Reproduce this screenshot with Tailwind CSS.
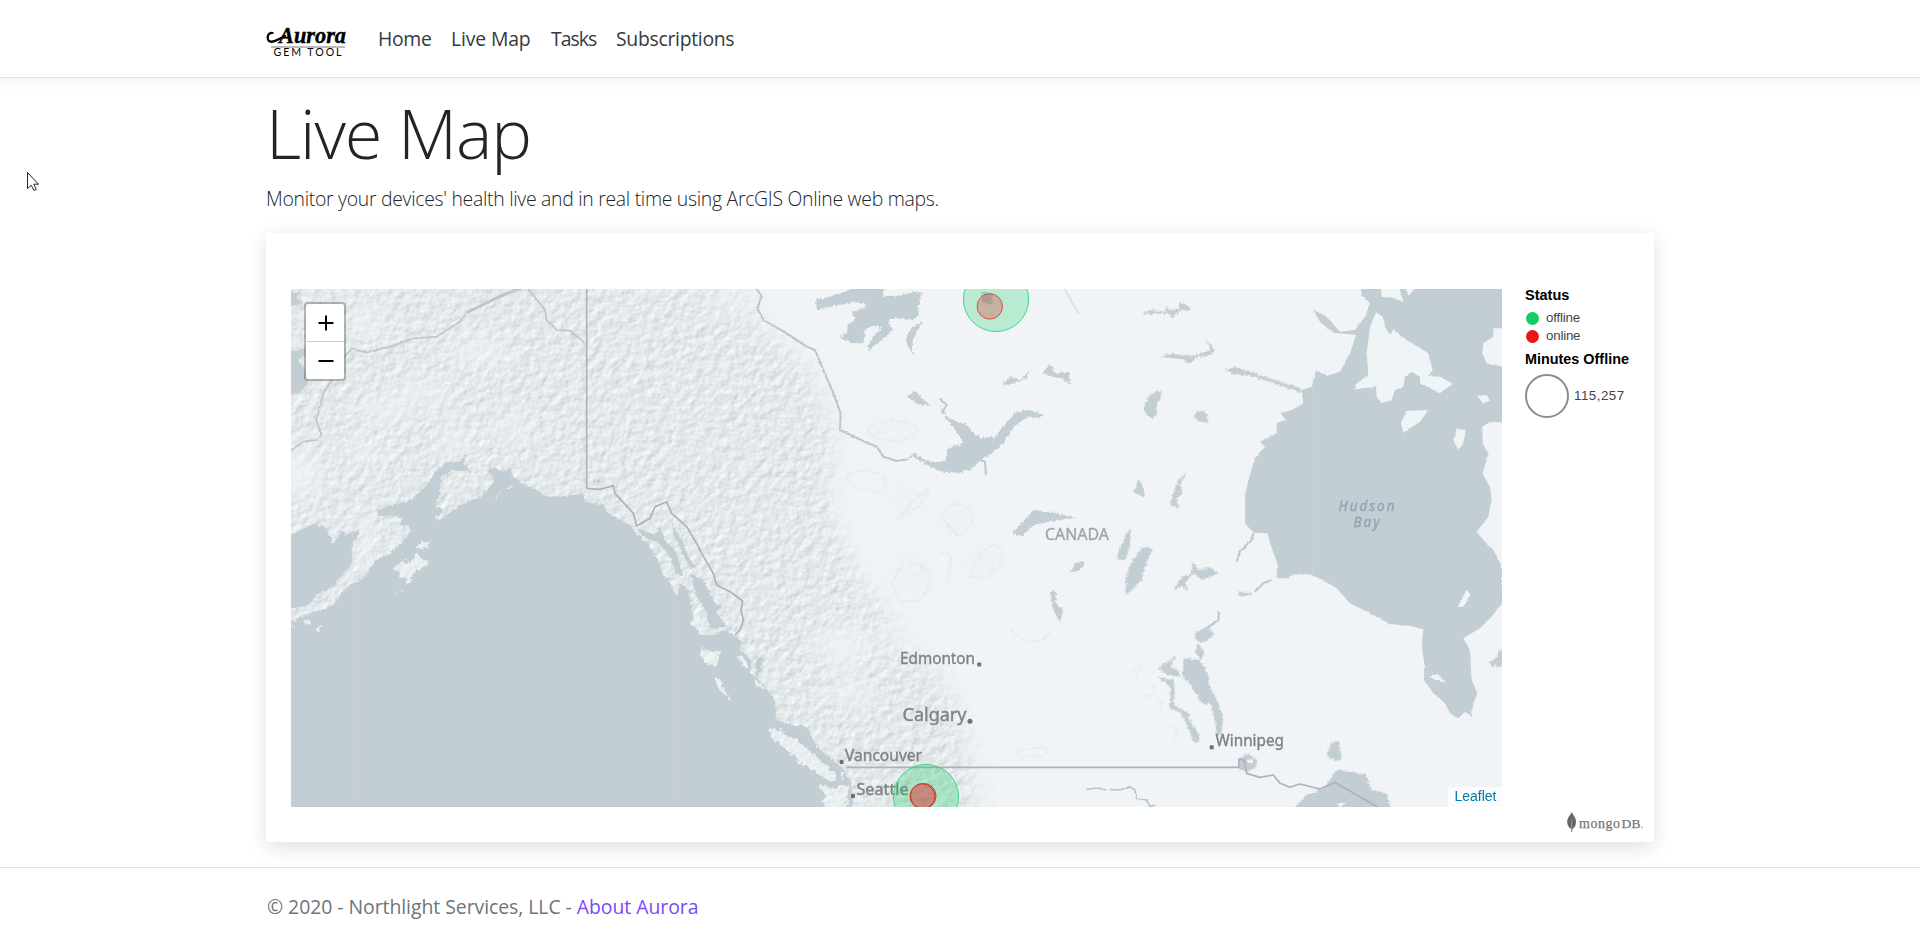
<!DOCTYPE html>
<html lang="en">
<head>
<meta charset="utf-8">
<title>Live Map - Aurora</title>
<script src="https://cdn.jsdelivr.net/npm/@tailwindcss/browser@4"></script>
</head>
<body class="h-[941px] overflow-hidden bg-white font-['Open_Sans','Noto_Sans',sans-serif] text-[#212529]">
<header class="h-[78px] border-b border-[#dee2e6] bg-white shadow-[0_4px_12px_rgba(0,0,0,0.05)]">
  <nav class="mx-auto flex h-[77px] w-[1388px] items-center text-[19.4px] text-[#343a40]">
    <svg class="h-[40px] w-[84px] shrink-0" viewBox="0 0 84 40" aria-label="Aurora Gem Tool">
      <text x="13" y="24" font-family="'Liberation Serif',serif" font-weight="bold" font-style="italic" stroke="#000" stroke-width=".4" font-size="22.5" textLength="67" lengthAdjust="spacingAndGlyphs">Aurora</text>
      <path d="M6.5 14C2.5 13 .5 18 2.5 21.5C6 25.5 13 19.5 19 17" fill="none" stroke="#000" stroke-width="2.2" stroke-linecap="round"/>
      <path d="M5 28H79" stroke="#bbb" stroke-width="2"/>
      <text x="7.5" y="37.4" font-family="Lato,sans-serif" font-size="10.6" textLength="68">GEM TOOL</text>
    </svg>
    <div class="ml-[28px] flex gap-[20px]">
      <a class="w-[53px] whitespace-nowrap tracking-[-0.3px]">Home</a>
      <a class="w-[80px] whitespace-nowrap tracking-[-0.15px]">Live Map</a>
      <a class="w-[45px] whitespace-nowrap tracking-[-1px]">Tasks</a>
      <a class="whitespace-nowrap tracking-[-0.3px]">Subscriptions</a>
    </div>
  </nav>
</header>
<main class="mx-auto w-[1388px]">
  <h1 class="h-[101px] pt-[11px] text-[68.5px] leading-[88px] font-light tracking-[-1.1px]">Live Map</h1>
  <p class="h-[54px] pt-[5px] text-[19.4px] leading-[30px] font-light tracking-[-0.29px]">Monitor your devices' health live and in real time using ArcGIS Online web maps.</p>
  <section class="h-[609px] rounded bg-white pt-[56px] pl-[25px] shadow-[0_5px_20px_rgba(0,0,0,0.13)]">
    <div class="flex">
      <div class="relative h-[518px] w-[1211px] overflow-hidden bg-[#f0f4f6]">
        <svg class="block h-[518px] w-[1211px]" viewBox="291 289 1211 518">
          <defs>
            <filter id="relief" x="0" y="0" width="100%" height="100%" color-interpolation-filters="sRGB">
              <feTurbulence type="fractalNoise" baseFrequency=".12" numOctaves="3" seed="7"/>
              <feColorMatrix values="0 0 0 0 0 0 0 0 0 0 0 0 0 0 0 1 0 0 0 0"/>
              <feDiffuseLighting surfaceScale=".55" diffuseConstant="1.11" lighting-color="#edf2f4"><feDistantLight azimuth="225" elevation="60"/></feDiffuseLighting>
            </filter>
            <filter id="coast" filterUnits="userSpaceOnUse" x="0" y="0" width="3800" height="1700">
              <feTurbulence type="fractalNoise" baseFrequency=".1" numOctaves="3" seed="3"/>
              <feDisplacementMap in="SourceGraphic" scale="7" xChannelSelector="R" yChannelSelector="G"/>
            </filter>
            <filter id="rough" filterUnits="userSpaceOnUse" x="0" y="0" width="3800" height="1700">
              <feTurbulence type="fractalNoise" baseFrequency=".12" numOctaves="3" seed="11"/>
              <feDisplacementMap in="SourceGraphic" scale="14" xChannelSelector="R" yChannelSelector="G"/>
            </filter>
            <filter id="island" filterUnits="userSpaceOnUse" x="0" y="0" width="3800" height="1700" color-interpolation-filters="sRGB">
              <feTurbulence type="fractalNoise" baseFrequency=".045" numOctaves="3" seed="11" result="n"/>
              <feDisplacementMap in="SourceGraphic" in2="n" scale="30" xChannelSelector="R" yChannelSelector="G" result="shape"/>
              <feColorMatrix in="n" values="0 0 0 0 0 0 0 0 0 0 0 0 0 0 0 1 0 0 0 0"/>
              <feDiffuseLighting surfaceScale=".7" diffuseConstant="1.13" lighting-color="#eff4f5"><feDistantLight azimuth="225" elevation="60"/></feDiffuseLighting>
              <feComposite operator="in" in2="shape"/>
            </filter>
            <filter id="soft" filterUnits="userSpaceOnUse" x="-100" y="-100" width="2800" height="1900"><feGaussianBlur stdDeviation="30"/></filter>
            <mask id="hills" maskUnits="userSpaceOnUse" x="280" y="280" width="1230" height="540">
              <g transform="translate(280 280) scale(.33333)" filter="url(#soft)">
                <path fill="#fff" d="M-60 -60H1400L1440 130L1590 260L1665 440L1655 680L1700 800L1750 900L1880 1070L2020 1230L2070 1400L2110 1660H-60Z"/>
                <g fill="#000" opacity=".8">
                  <ellipse cx="600" cy="215" rx="100" ry="46"/><ellipse cx="430" cy="335" rx="85" ry="42"/><ellipse cx="310" cy="390" rx="85" ry="40"/>
                  <ellipse cx="525" cy="480" rx="42" ry="60"/><ellipse cx="60" cy="580" rx="80" ry="80"/><ellipse cx="260" cy="510" rx="65" ry="42"/>
                  <ellipse cx="260" cy="130" rx="65" ry="55"/><ellipse cx="700" cy="440" rx="70" ry="38"/><ellipse cx="1360" cy="60" rx="80" ry="40"/>
                  <ellipse cx="250" cy="790" rx="38" ry="85"/><ellipse cx="1690" cy="1100" rx="95" ry="75"/><ellipse cx="1720" cy="1240" rx="75" ry="45"/><ellipse cx="1880" cy="1080" rx="80" ry="60"/>
                </g>
                <g fill="#777"><ellipse cx="1830" cy="450" rx="60" ry="20"/><ellipse cx="2025" cy="715" rx="40" ry="30"/><ellipse cx="1880" cy="660" rx="40" ry="30"/><ellipse cx="2110" cy="840" rx="50" ry="25"/><ellipse cx="1900" cy="880" rx="40" ry="50"/></g>
              </g>
            </mask>
          </defs>
          <rect x="291" y="289" width="1211" height="518" filter="url(#relief)" mask="url(#hills)"/>

          <g transform="translate(280 280) scale(.33333)">
            <!-- rivers -->
            <g fill="none" stroke="#bcc5ce" stroke-width="5" filter="url(#coast)" stroke-linejoin="round">
              <path d="M20 520L70 485L110 480L125 465L108 420L130 340L155 300M185 240L215 205L260 218L330 200L400 175L470 170L540 125L560 100L640 60L710 30L740 20L795 90L800 120L830 150L870 152L915 190"/>
              <path d="M560 98L640 58L710 28" stroke-width="8"/>
              <path d="M1425 20L1445 50L1432 85L1450 120L1520 160L1580 200L1605 210L1630 270L1660 340L1682 400L1680 450L1760 488L1790 500L1810 530L1850 543L1885 538M1978 355L2000 375L1985 400M2100 540L2115 545L2118 585M2920 760L2915 780L2880 815L2870 845M2975 900L2950 910L2925 935M2817 995L2815 1020L2780 1045" stroke-width="6"/>
              <path d="M2350 20L2395 100" stroke="#d5dde2"/>
              <path d="M2420 1528L2450 1524L2480 1530M2490 1528L2520 1530L2550 1520L2565 1530L2570 1555L2600 1560L2610 1580L2625 1575"/>
            </g>
            <g fill="none" stroke="#e4eaed" stroke-width="4" filter="url(#rough)" stroke-linejoin="round">
              <path d="M1760 450Q1810 410 1870 425T1905 465L1860 482L1790 478ZM1980 710Q2010 670 2040 675T2080 715Q2060 765 2030 765ZM1850 720Q1880 690 1910 650L1945 625Q1935 670 1890 700ZM1700 590Q1740 560 1780 575T1820 600Q1810 645 1780 635T1720 620ZM1835 910L1870 850Q1910 840 1940 870T1920 960L1860 965ZM1980 820Q2015 815 2012 840L2000 915M2070 890Q2090 820 2130 800T2165 840Q2140 890 2110 890ZM2190 1050Q2230 1085 2260 1085T2310 1055M2550 1180Q2595 1140 2580 1170L2565 1190M2610 1210Q2635 1220 2620 1245L2585 1250M2630 1265Q2650 1255 2645 1275L2640 1305M2660 1335Q2695 1340 2690 1360L2685 1380M2210 1415Q2260 1400 2300 1405Q2300 1430 2290 1430L2220 1430Z"/>
            </g>

            <g fill="#c3cdd4" filter="url(#rough)">
              <!-- Bristol Bay and Norton Sound -->
              <path d="M0 780L80 740L100 730L115 742L128 732L145 760L165 785L185 750L200 765L240 748L217 795L217 850L175 900L160 920L110 945L90 970L70 980L0 990ZM0 215L75 207L78 225L55 240L75 270L85 310L60 338L0 348ZM0 0L33 32L60 40L50 50L70 70L30 80L0 80Z"/>
              <!-- Pacific -->
              <path d="M0 1025L40 1025L60 1012L100 995L130 990L160 975L185 940L215 910L250 895L265 875L290 840L320 825L360 795L370 780L395 750L385 735L360 735L365 712L330 705L300 710L292 690L320 680L370 668L400 655L430 625L450 600L465 575L500 545L540 545L560 523L550 552L575 575L520 570L485 590L480 640L465 680L490 685L480 705L460 712L480 720L520 690L560 665L600 650L640 610L640 590L620 570L640 560L670 575L690 565L700 590L725 610L770 630L800 650L860 648L910 640L915 665L970 675L985 700L1010 715L1050 735L1080 770L1100 790L1120 815L1135 840L1150 890L1165 895L1190 950L1200 910L1225 930L1235 980L1240 1030L1260 1065L1305 1065L1330 1050L1360 1065L1385 1080L1380 1110L1410 1135L1410 1180L1440 1200L1460 1230L1485 1260L1490 1320L1540 1335L1580 1340L1600 1380L1610 1400L1635 1420L1660 1440L1685 1460L1710 1500L1718 1540L1720 1680H0Z"/>
              <!-- Inside Passage channels -->
              <path d="M1120 770L1140 740L1160 790L1185 810L1200 850L1210 890L1190 880L1170 830ZM1170 710L1180 740L1205 780L1225 830L1245 860L1235 870L1212 830L1185 770ZM1230 880L1270 900L1300 960L1310 1000L1340 1040L1290 1050L1280 1000L1250 950ZM1260 930L1290 980L1320 970L1325 985L1295 1000ZM1430 1130L1450 1130L1440 1180L1425 1190ZM1070 745L1130 765L1130 785L1090 770ZM935 600H960V606H935Z"/>
              <!-- lakes -->
              <g transform="translate(1260 0)">
                <path d="M348 60L390 50L450 30L470 15L548 15L550 48L600 48L640 35L665 40L655 80L655 105L635 122L610 115L575 115L565 130L580 150L550 175L510 210L500 200L525 165L545 145L520 135L495 150L490 190L455 190L415 170L440 160L445 130L465 120L455 95L495 85L498 72L460 65L430 72L350 90Z"/>
                <path d="M640 140L668 123L640 175L635 200L640 225L620 190L620 165ZM622 350L643 333L690 375L655 375ZM718 375L745 415L800 435L840 475L885 470L925 420L950 395L990 390L1030 405L1020 415L985 408L940 440L910 490L870 525L840 540L820 565L780 578L730 575L690 560L670 548L640 530L620 540L640 520L690 545L735 545L745 505L790 490L760 440L735 415Z"/>
                <path d="M938 760L960 735L1000 690L1050 695L1130 715L1060 722L1000 735L965 768ZM907 315L930 290L960 300L990 270L980 295L930 312ZM1028 280L1050 250L1065 280L1105 275L1113 318L1085 295L1055 290ZM845 35L880 40L875 75L845 65Z"/>
                <path d="M1110 880L1125 850L1155 840L1150 865L1125 875ZM1052 935L1068 935L1066 970L1090 990L1080 1030L1058 985Z"/>
              </g>
              <g transform="translate(2490 0)">
                <path d="M98 100L120 90L165 95L170 75L178 90L210 85L205 65L240 80L238 95L215 88L188 112L170 100L120 102ZM152 230L185 220L240 228L300 212L290 180L312 205L310 222L260 232L240 250L215 238ZM345 270L370 260L420 275L480 295L560 320L580 335L560 335L480 305L420 288L370 283ZM103 370L120 345L150 330L155 350L140 375L140 405L125 415L105 400ZM248 403L285 390L298 432L265 422ZM85 597L105 635L103 652L72 635ZM190 640L205 600L230 578L210 615L218 640L200 655L205 688L180 670ZM30 800L60 745L62 790L45 840L20 835Z"/>
                <path d="M50 880L70 835L100 800L128 805L105 860L95 900L65 930L45 950ZM190 930L215 890L240 885L250 845L265 870L300 862L325 880L275 900L250 880L225 910L235 930L215 920ZM382 935L430 940L425 947L390 948Z"/>
                <path d="M222 1135L270 1140L295 1185L300 1220L320 1260L340 1310L335 1360L320 1370L315 1320L300 1270L275 1270L240 1210L217 1190ZM145 1165L200 1125L180 1160L210 1175L205 1190L175 1185ZM142 1190L190 1200L195 1230L190 1275L235 1300L240 1320L270 1370L265 1387L250 1388L235 1345L210 1295L180 1285L180 1220ZM255 1060L290 1040L312 1060L290 1085L260 1085ZM265 1090L285 1120L272 1140L255 1115Z"/>
                <path d="M388 1435L415 1420L440 1440L440 1460L415 1475L388 1470ZM665 1385L688 1385L695 1435L675 1445L650 1425ZM540 1600L590 1545L640 1525L680 1470L765 1482L785 1530L830 1540L845 1600ZM1135 1150L1160 1130L1165 1110L1182 1110V1160L1145 1158Z"/>
              </g>
            </g>
            <g transform="translate(2490 0)" filter="url(#coast)">
              <!-- Hudson Bay -->
              <path fill="#c3cdd4" d="M752 10L755 45L780 70L765 110L735 150L690 155L650 110L610 90L630 125L670 158L738 165L720 220L690 275L650 288L618 270L605 320L575 330L580 370L545 390L512 400L525 420L500 430L500 460L450 485L465 500L435 535L415 600L405 650L405 730L430 758L472 760L487 810L502 850L500 895L530 895L550 883L600 883L635 898L680 925L720 970L780 1000L840 1032L900 1038L940 1048L935 1100L943 1150L942 1200L970 1240L1005 1270L1020 1300L1045 1315L1065 1295L1085 1310L1090 1270L1102 1240L1085 1200L1080 1110L1060 1075L1110 1045L1145 1010L1176 970L1176 860L1150 810L1125 785L1100 755L1135 710L1145 660L1140 620L1118 582L1135 520L1118 490L1117 440L1140 425L1200 428V265L1130 250L1117 220L1120 190L1150 170L1150 145L1200 145V10Z"/>
              <path fill="#eff4f6" d="M798 97L818 110L825 140L840 165L850 148L890 180L955 220L968 270L955 288L990 290L1028 312L990 340L960 325L930 310L930 290L905 275L885 290L880 320L855 330L845 360L815 370L800 350L798 320L735 328L735 315L775 285L770 220L780 140ZM890 392L955 390L930 425L880 458L873 430ZM1040 447L1067 450L1060 490L1045 510L1030 480ZM1100 347L1130 345L1140 362L1120 370ZM812 15L865 15L880 65L850 55L815 50ZM885 15L925 15L895 48ZM955 1190L985 1182L1008 1208L985 1203ZM1043 980L1070 930L1082 945L1060 980ZM680 1570L710 1568L690 1582ZM410 1440L430 1437L428 1450L412 1448Z"/>
            </g>
            <!-- Pacific islands -->
            <g fill="#e9eff1" filter="url(#island)">
              <path d="M340 870L365 850L400 840L410 820L445 840L440 860L400 880L380 915L370 895ZM403 800L430 780L455 790L430 810ZM640 660L680 625L655 650ZM680 620L705 620L690 628ZM76 1025L92 1020L92 1038L80 1038ZM108 1045L122 1036L118 1052ZM295 985L303 988ZM338 935L348 933L340 940ZM360 932H372V935H360ZM150 778H168V785H155ZM33 1040L45 1042L40 1046Z"/>
              <path d="M1465 1350L1500 1350L1550 1380L1600 1420L1630 1450L1665 1480L1675 1505L1650 1500L1610 1480L1560 1450L1520 1410L1485 1380ZM1622 1515L1660 1525L1700 1515L1705 1540L1690 1620L1645 1620L1630 1540ZM1255 1110L1320 1115L1315 1150L1300 1165L1280 1150L1265 1130ZM1300 1180L1320 1200L1352 1262L1330 1240L1305 1210ZM1240 995L1255 1010L1258 1045L1240 1030ZM1372 1130L1400 1140L1410 1170L1385 1160ZM1425 1190L1450 1210L1455 1230L1435 1220ZM1680 1480L1690 1485L1688 1500Z"/>
            </g>
            <!-- borders -->
            <g fill="none" stroke="#b0aec0" stroke-width="5" stroke-linejoin="round">
              <path d="M920 20V625L960 628L1000 617L1005 640L1060 700L1070 738L1110 715L1125 680L1160 665L1175 700L1220 740L1250 790L1265 820L1300 880L1310 915L1350 935L1388 963L1383 990L1390 1020L1380 1050L1365 1065"/>
              <path d="M1700 1462H2877V1437L2892 1440L2900 1480L2940 1492L2980 1485L3000 1510L3030 1522L3060 1512L3120 1527L3165 1507L3310 1591"/>
            </g>
            <g stroke="#dfe6ea" stroke-width="2" opacity=".3"><path d="M217 20V1600M1179 780V1600M2137 20V1600M3097 20V1600"/></g>
          </g>

          <!-- city and area labels -->
          <g fill="#6c6e85"><rect x="977.2" y="662.5" width="4" height="4" rx="1"/><circle cx="970" cy="721.3" r="2.5"/><rect x="839.6" y="760" width="4" height="4" rx="1"/><rect x="851" y="794" width="4" height="4" rx="1"/><rect x="1209.7" y="745.3" width="4" height="4"/></g>
          <g font-family="'Noto Sans','Open Sans',sans-serif" fill="#7d8284" stroke="#7d8284" stroke-width=".35">
            <text x="900" y="664" font-size="15.5" textLength="75" lengthAdjust="spacingAndGlyphs">Edmonton</text>
            <text x="902.5" y="720.5" font-size="18" textLength="64" lengthAdjust="spacingAndGlyphs">Calgary</text>
            <text x="845" y="761" font-size="15.5" textLength="77" lengthAdjust="spacingAndGlyphs">Vancouver</text>
            <text x="856.5" y="795.3" font-size="15.5" textLength="52" lengthAdjust="spacingAndGlyphs">Seattle</text>
            <text x="1215.5" y="746" font-size="15.5" textLength="68.5" lengthAdjust="spacingAndGlyphs">Winnipeg</text>
            <text x="1045" y="540" font-size="17" fill="#a3a4aa" stroke="#a3a4aa" textLength="64" lengthAdjust="spacingAndGlyphs">CANADA</text>
            <g fill="#93a3b1" stroke="#93a3b1" font-style="italic" font-size="13.5">
              <text x="1338.5" y="510.7" textLength="56">Hudson</text><text x="1353.5" y="527" textLength="26">Bay</text>
            </g>
          </g>

          <!-- device markers -->
          <g fill-opacity=".25" stroke-width="1">
            <circle cx="996" cy="299" r="32.6" fill="#13ce66" stroke="#3fd583"/>
            <circle cx="989.8" cy="306.4" r="12.7" fill="#e41a1a" fill-opacity=".27" stroke="#df4a43"/>
            <circle cx="926" cy="797" r="32.6" fill="#13ce66" fill-opacity=".28" stroke="#3fd583"/>
            <circle cx="922.4" cy="796.3" r="12.4" fill="#e41a1a" stroke="#d8392f"/>
            <circle cx="923.3" cy="796" r="12.7" fill="#e41a1a" stroke="#d8392f"/>
          </g>
        </svg>
        <div class="absolute top-[13px] left-[13px] flex h-[79px] w-[42px] flex-col rounded border-2 border-black/25 bg-white bg-clip-padding pl-px">
          <button class="flex h-[38px] items-center justify-center border-b border-[#ccc]" aria-label="Zoom in"><svg class="size-[16px]" viewBox="0 0 16 16"><path d="M8 .5V15.5M.5 8H15.5" stroke="#000" stroke-width="2"/></svg></button>
          <button class="flex h-[37px] items-center justify-center" aria-label="Zoom out"><svg class="size-[16px]" viewBox="0 0 16 16"><path d="M.5 8H15.5" stroke="#000" stroke-width="2"/></svg></button>
        </div>
        <div class="absolute right-0 bottom-0 h-[20px] w-[54px] bg-white/75 pl-px text-center font-['Liberation_Sans',sans-serif] text-[14px] leading-[18px] text-[#0078a8]">Leaflet</div>
      </div>
      <aside class="ml-[23px] font-['Liberation_Sans',sans-serif]">
        <h2 class="-mt-[3px] h-[23px] text-[14.5px] leading-[18px] font-bold text-black">Status</h2>
        <div class="flex h-[18px] items-center gap-[7px] pl-px text-[13.3px] tracking-[-0.2px] text-[#444]"><i class="size-[13px] rounded-full bg-[#16cb63]"></i><span>offline</span></div>
        <div class="flex h-[18px] items-center gap-[7px] pl-px text-[13.3px] tracking-[-0.2px] text-[#444]"><i class="size-[13px] rounded-full bg-[#e61919]"></i><span>online</span></div>
        <h2 class="mt-[5px] h-[24px] text-[14.4px] leading-[18px] font-bold text-black">Minutes Offline</h2>
        <div class="flex items-center gap-[5px] text-[13.3px] tracking-[0.5px] text-[#444]"><i class="size-[44px] rounded-full border-2 border-[#8b8b8b]"></i><span>115,257</span></div>
      </aside>
    </div>
    <div class="flex justify-end pt-[4px] pr-[8px]">
      <svg class="h-[22px] w-[80px]" viewBox="0 0 80 22" aria-label="mongoDB">
        <path d="M5.7 1C7 4 10 6 10 11C10 15 8 17 6.4 18L6.2 21H5.4L5.1 18C2.8 16.5 1.2 14 1.2 11C1.2 6 4.7 4 5.7 1Z" fill="#666"/><path d="M5.7 9V19" stroke="#aaa" stroke-width=".8"/>
        <text x="13" y="17.3" font-family="'Liberation Serif',serif" font-size="14" fill="#777" stroke="#777" stroke-width=".25" textLength="41">mongo</text>
        <text x="55.5" y="17.3" font-family="'Liberation Serif',serif" font-size="13.5" fill="#777" stroke="#777" stroke-width=".25" textLength="19">DB</text>
        <circle cx="76" cy="16.4" r=".8" fill="#aaa"/>
      </svg>
    </div>
  </section>
</main>
<footer class="mt-[25px] border-t border-[#dee2e6]">
  <div class="mx-auto w-[1388px] pt-[24px] pl-px text-[19.4px] leading-[30px] tracking-[-0.04px] text-[#6c757d]">© 2020 - Northlight Services, LLC - <a class="text-[#7749f8]">About Aurora</a></div>
</footer>
<svg class="absolute top-[171px] left-[26px] h-[21px] w-[15px]" viewBox="0 0 15 21"><path d="M1.5 1.5V17.5L5.2 14.3L8 19.5L10.2 18.5L7.8 13.2H12.5Z" fill="#fff" stroke="#223" stroke-width="1"/></svg>
</body>
</html>
